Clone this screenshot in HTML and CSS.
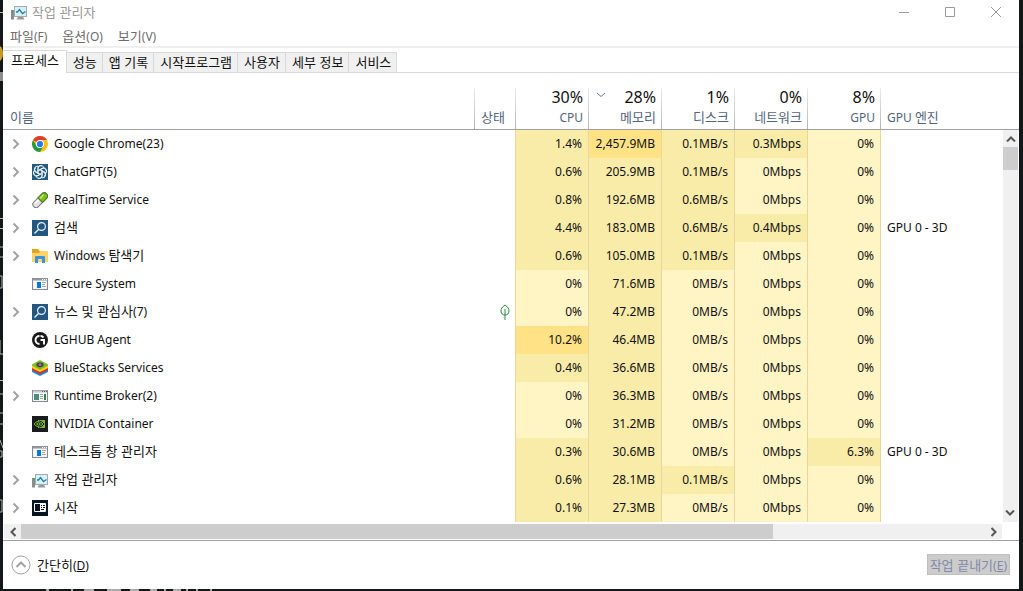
FILE: index.html
```html
<!DOCTYPE html>
<html lang="ko">
<head>
<meta charset="utf-8">
<meta name="viewport" content="width=device-width, initial-scale=1">
<title>작업 관리자</title>
<link rel="stylesheet" href="styles.css">
</head>
<body>
<svg class="defs" aria-hidden="true">
  <symbol id="chev" viewBox="0 0 8 12"><path d="M1.500 1.500 6 6l-4.500 4.500" fill="none" stroke="#a2a2a2" stroke-width="2"/></symbol>
  <symbol id="monitor" viewBox="0 0 16 16"><path d="M1.500 6v9.500" stroke="#8c8c8c" stroke-width="3"/><path d="M1.500 6v3" stroke="#3fae49" stroke-width="1"/><path d="M7 13h5l1.500 2.500h-8z" fill="#9a9a9a"/><rect x="3.500" y="2.500" width="12" height="10" fill="#d7f1fb" stroke="#a4abad"/><path d="M5 8h1.500l2-2.500 3 4 3-2" fill="none" stroke="#287fa5" stroke-width="1.300"/></symbol>
  <symbol id="app" viewBox="0 0 16 16"><rect x=".5" y="2.500" width="15" height="11" fill="#f5f5f5" stroke="#85898e"/><path d="M1 3.500h14" stroke="#9298a0" stroke-width="2"/><path d="M10 3.500h1m1 0h1m1 0h1" stroke="#fff"/><rect x="5" y="6" width="4" height="6" fill="#0078d7"/><path d="M10 6.500h4M10 8.500h3M10 10.500h4" stroke="#a5a5a5"/></symbol>
  <symbol id="broker" viewBox="0 0 16 16"><rect x=".5" y="2.500" width="15" height="11" fill="#f5f5f5" stroke="#85898e"/><path d="M1 3.500h14" stroke="#c2c8ce" stroke-width="2"/><path d="M10 3.500h1m1 0h1m1 0h1" stroke="#59636d"/><rect x="2" y="6" width="5" height="6" fill="#4b8c83"/><path d="M8 6.500h3M8 8.500h3M8 10.500h3" stroke="#a5a5a5"/><path d="M13 6v6" stroke="#35874d" stroke-width="2"/></symbol>
  <symbol id="find" viewBox="0 0 16 16"><path fill="#235780" d="M0 0h16v16H0z"/><circle cx="9.500" cy="6.500" r="3.900" fill="none" stroke="#e8f1f7" stroke-width="1.200"/><path d="m6.700 9.300-4.200 4.200" stroke="#e8f1f7" stroke-width="1.300"/></symbol>
  <symbol id="up" viewBox="0 0 10 6"><path d="M1 5.500 5 1.500l4 4" fill="none" stroke="currentColor" stroke-width="2"/></symbol>
</svg>
<div class="desktop">
  <svg class="edge" viewBox="0 0 3 591" aria-hidden="true"><path d="M0 12.500h3M0 218.500h3M0 228.500h3M0 247h3M0 257h3M0 276h2v12H0M0 340v14h3M0 380.500h3M0 394h3M0 413h3M0 424h3M0 440l3 8M0 451h2v6H0M0 500h2v12H0" fill="none" stroke="#b5b5b5"/><path d="M0 72h3v9H0z" fill="#8e8e8e"/><path d="M0 46c4 2 4 13 0 15z" fill="#c99b25"/></svg>
  <main class="window">
    <header class="titlebar">
      <svg class="icon" aria-hidden="true"><use href="#monitor"/></svg>
      <h1>작업 관리자</h1>
      <div class="controls">
        <button aria-label="최소화"><svg viewBox="0 0 12 12"><path d="M1 6.500h10"/></svg></button>
        <button aria-label="최대화"><svg viewBox="0 0 12 12"><path d="M1.500 1.500h9v9h-9z"/></svg></button>
        <button aria-label="닫기"><svg viewBox="0 0 12 12"><path d="m1 1 10 10M11 1 1 11"/></svg></button>
      </div>
    </header>
    <nav class="menu" aria-label="메뉴"><button>파일<span>(F)</span></button><button>옵션<span>(O)</span></button><button>보기<span>(V)</span></button></nav>
    <div class="tabs" role="tablist">
      <button role="tab" aria-selected="true" class="active">프로세스</button><button role="tab">성능</button><button role="tab">앱 기록</button><button role="tab">시작프로그램</button><button role="tab">사용자</button><button role="tab">세부 정보</button><button role="tab">서비스</button>
    </div>
    <section class="processes">
      <table>
        <colgroup><col><col class="c-status"><col class="c-num"><col class="c-num"><col class="c-num"><col class="c-num"><col class="c-num"><col class="c-engine"></colgroup>
        <thead><tr>
          <th scope="col" class="left">이름</th>
          <th scope="col" class="left">상태</th>
          <th scope="col"><b>30%</b><span class="en">CPU</span></th>
          <th scope="col" aria-sort="descending"><b><svg class="sort" viewBox="0 0 10 6" aria-hidden="true"><path d="m1 1 4 3.500L9 1"/></svg>28%</b>메모리</th>
          <th scope="col"><b>1%</b>디스크</th>
          <th scope="col"><b>0%</b>네트워크</th>
          <th scope="col"><b>8%</b><span class="en">GPU</span></th>
          <th scope="col" class="left"><span class="en">GPU </span>엔진</th>
        </tr></thead>
        <tbody>
          <tr><td><div class="name"><button aria-label="확장"><svg><use href="#chev"/></svg></button><svg class="icon" viewBox="0 0 16 16"><circle cx="8" cy="8" r="8" fill="#fbc116"/><path d="M8 8 1.100 4A8 8 0 0 1 14.900 4H8z" fill="#e33b2e"/><path d="M1.100 4A8 8 0 0 0 8 16l3.500-6L8 8 4.500 10z" fill="#229a4b"/><circle cx="8" cy="8" r="4" fill="#fff"/><circle cx="8" cy="8" r="3.100" fill="#2878e8"/></svg><span>Google Chrome(23)</span></div></td><td></td><td class="mid">1.4%</td><td class="high">2,457.9MB</td><td class="mid">0.1MB/s</td><td class="mid">0.3Mbps</td><td class="low">0%</td><td></td></tr>
          <tr><td><div class="name"><button aria-label="확장"><svg><use href="#chev"/></svg></button><svg class="icon" viewBox="0 0 16 16"><path fill="#245a7e" d="M0 0h16v16H0z"/><g fill="none" stroke="#e9f1f5" stroke-width="1"><path id="petal" d="M6 9.200V4.500c0-3.800 5.500-4 6-.4M6 6.800l4-2.300c2-1.200 4 .5 4 2.200"/><use href="#petal" transform="rotate(60 8 8)"/><use href="#petal" transform="rotate(120 8 8)"/><use href="#petal" transform="rotate(180 8 8)"/><use href="#petal" transform="rotate(240 8 8)"/><use href="#petal" transform="rotate(300 8 8)"/></g></svg><span>ChatGPT(5)</span></div></td><td></td><td class="mid">0.6%</td><td class="mid">205.9MB</td><td class="mid">0.1MB/s</td><td class="low">0Mbps</td><td class="low">0%</td><td></td></tr>
          <tr><td><div class="name"><button aria-label="확장"><svg><use href="#chev"/></svg></button><svg class="icon" viewBox="0 0 16 16"><g transform="rotate(-45 8 8)"><rect x="-1" y="5" width="18" height="6.500" rx="3.200" fill="#e4e4e4" stroke="#777"/><path d="M8 5h5.800a3.200 3.200 0 0 1 0 6.500H8z" fill="#7cc01c" stroke="#4a8220"/><path d="M2 7h5" stroke="#fff" stroke-width="1.500"/><path d="M9 7h5" stroke="#c5f07a" stroke-width="1.500"/></g></svg><span>RealTime Service</span></div></td><td></td><td class="mid">0.8%</td><td class="mid">192.6MB</td><td class="mid">0.6MB/s</td><td class="low">0Mbps</td><td class="low">0%</td><td></td></tr>
          <tr><td><div class="name"><button aria-label="확장"><svg><use href="#chev"/></svg></button><svg class="icon"><use href="#find"/></svg><span class="ko">검색</span></div></td><td></td><td class="mid">4.4%</td><td class="mid">183.0MB</td><td class="mid">0.6MB/s</td><td class="mid">0.4Mbps</td><td class="low">0%</td><td>GPU 0 - 3D</td></tr>
          <tr><td><div class="name"><button aria-label="확장"><svg><use href="#chev"/></svg></button><svg class="icon" viewBox="0 0 16 16"><path d="M0 1h6l1.500 2H16v11H0z" fill="#e6a519"/><path d="M0 5h7l1.500-2H16v11H0z" fill="#ffd365"/><path d="M3 15V9q0-1 1-1h8q1 0 1 1v6h-3v-4H6v4z" fill="#3694de"/></svg><span>Windows <span class="ko">탐색기</span></span></div></td><td></td><td class="mid">0.6%</td><td class="mid">105.0MB</td><td class="mid">0.1MB/s</td><td class="low">0Mbps</td><td class="low">0%</td><td></td></tr>
          <tr><td><div class="name"><i></i><svg class="icon"><use href="#app"/></svg><span>Secure System</span></div></td><td></td><td class="low">0%</td><td class="mid">71.6MB</td><td class="low">0MB/s</td><td class="low">0Mbps</td><td class="low">0%</td><td></td></tr>
          <tr><td><div class="name"><button aria-label="확장"><svg><use href="#chev"/></svg></button><svg class="icon"><use href="#find"/></svg><span><span class="ko">뉴스 및 관심사</span>(7)</span></div></td><td class="status"><svg class="leaf" viewBox="0 0 10 16" role="img" aria-label="절전 모드"><path d="M5 1C2 3 1 5 1 7c0 3 2 4 4 4s4-1 4-4c0-2-1-4-4-6zM5 5v11"/></svg></td><td class="low">0%</td><td class="mid">47.2MB</td><td class="low">0MB/s</td><td class="low">0Mbps</td><td class="low">0%</td><td></td></tr>
          <tr><td><div class="name"><i></i><svg class="icon" viewBox="0 0 16 16"><circle cx="8" cy="8" r="8" fill="#191919"/><path d="M7.500 4A4 4 0 0 0 7.500 12M8.500 8h3.500v4.500M8.500 4q2 0 3 1.500" fill="none" stroke="#fff" stroke-width="1.900"/></svg><span>LGHUB Agent</span></div></td><td></td><td class="high">10.2%</td><td class="mid">46.4MB</td><td class="low">0MB/s</td><td class="low">0Mbps</td><td class="low">0%</td><td></td></tr>
          <tr><td><div class="name"><i></i><svg class="icon" viewBox="0 0 16 16"><path d="m0 9 8 4 8-4v3l-8 4-8-4z" fill="#2485cf"/><path d="m0 7 8 4 8-4v3l-8 4-8-4z" fill="#e52c27"/><path d="m0 5 8 4 8-4v3l-8 4-8-4z" fill="#ffd216"/><path d="M0 4.500 8 0l8 4.500v1L8 10 0 5.500z" fill="#7abb2b"/><ellipse cx="8" cy="4.800" rx="3.500" ry="2.400" fill="#394143"/><ellipse cx="8" cy="4.800" rx="1.600" ry="1.200" fill="#b66bb0"/></svg><span>BlueStacks Services</span></div></td><td></td><td class="mid">0.4%</td><td class="mid">36.6MB</td><td class="low">0MB/s</td><td class="low">0Mbps</td><td class="low">0%</td><td></td></tr>
          <tr><td><div class="name"><button aria-label="확장"><svg><use href="#chev"/></svg></button><svg class="icon"><use href="#broker"/></svg><span>Runtime Broker(2)</span></div></td><td></td><td class="low">0%</td><td class="mid">36.3MB</td><td class="low">0MB/s</td><td class="low">0Mbps</td><td class="low">0%</td><td></td></tr>
          <tr><td><div class="name"><i></i><svg class="icon" viewBox="0 0 16 16"><path fill="#191b1c" d="M0 0h16v16H0z"/><path d="M6 4h7v8H6z" fill="#74b72c"/><path d="M2 8q4-5 9 0-5 5-9 0zM4.500 8q2-2.500 4 0-2 2.500-4 0z" fill="#191b1c" stroke="#74b72c"/><path d="M7 5q3 0 5 3-2 3-5 3" fill="none" stroke="#191b1c"/></svg><span>NVIDIA Container</span></div></td><td></td><td class="low">0%</td><td class="mid">31.2MB</td><td class="low">0MB/s</td><td class="low">0Mbps</td><td class="low">0%</td><td></td></tr>
          <tr><td><div class="name"><i></i><svg class="icon"><use href="#app"/></svg><span class="ko">데스크톱 창 관리자</span></div></td><td></td><td class="mid">0.3%</td><td class="mid">30.6MB</td><td class="low">0MB/s</td><td class="low">0Mbps</td><td class="mid">6.3%</td><td>GPU 0 - 3D</td></tr>
          <tr><td><div class="name"><button aria-label="확장"><svg><use href="#chev"/></svg></button><svg class="icon"><use href="#monitor"/></svg><span class="ko">작업 관리자</span></div></td><td></td><td class="mid">0.6%</td><td class="mid">28.1MB</td><td class="mid">0.1MB/s</td><td class="low">0Mbps</td><td class="low">0%</td><td></td></tr>
          <tr><td><div class="name"><button aria-label="확장"><svg><use href="#chev"/></svg></button><svg class="icon" viewBox="0 0 16 16"><path fill="#071522" d="M0 0h16v16H0z"/><path d="M2.500 3.500h11v8h-11z" fill="none" stroke="#fff"/><path d="M8 4h5v7H8z" fill="#fff"/><path d="M9 5.500h1m1 0h2M9 7.500h1m1 0h2M9 9.500h3" stroke="#071522"/></svg><span class="ko">시작</span></div></td><td></td><td class="mid">0.1%</td><td class="mid">27.3MB</td><td class="low">0MB/s</td><td class="low">0Mbps</td><td class="low">0%</td><td></td></tr>
        </tbody>
      </table>
      <div class="vscroll"><button aria-label="위로"><svg><use href="#up"/></svg></button><div class="thumb"></div><button class="down" aria-label="아래로"><svg><use href="#up"/></svg></button></div>
      <div class="hscroll"><button class="prev" aria-label="왼쪽"><svg><use href="#up"/></svg></button><div class="track"><div class="thumb"></div></div><button class="next" aria-label="오른쪽"><svg><use href="#up"/></svg></button></div>
    </section>
    <footer>
      <button class="fewer"><svg viewBox="0 0 20 20" aria-hidden="true"><circle cx="10" cy="10" r="9"/><path d="m5.500 12 4.500-4.500 4.500 4.500" stroke-width="2"/></svg><span>간단히<span class="key">(<u>D</u>)</span></span></button>
      <button class="end" disabled>작업 끝내기<span class="key">(<u>E</u>)</span></button>
    </footer>
  </main>
  <svg class="under" viewBox="0 0 260 2" aria-hidden="true"><path d="M43 1h3M68 1h2M81 1h10M104 1h14M127 1h9M147 1h7M161 1h2M170 1h8M183 1h2M193 1h2M207 1h2" stroke="#aaa" stroke-width="2"/></svg>
</div>
</body>
</html>
```
FILE: styles.css
```css
* { box-sizing: border-box; }
body {
  margin: 0;
  background: #141717;
  color: #111;
  font: 12px/16px "Noto Sans", "Noto Sans CJK KR", sans-serif;
}
button {
  margin: 0;
  padding: 0;
  border: 0;
  background: none;
  color: inherit;
  font: inherit;
}
svg { display: block; }
.defs { position: absolute; width: 0; height: 0; }
.icon { width: 16px; height: 16px; flex: none; }

.desktop {
  display: grid;
  grid-template-columns: 3px minmax(0, 1fr) 4px;
  grid-template-rows: 1fr 2px;
  min-height: 100vh;
}
.edge { grid-area: 1 / 1 / 3 / 2; width: 3px; height: 591px; }
.under { grid-area: 2 / 2; width: 260px; height: 2px; }
.window {
  display: flex;
  flex-direction: column;
  grid-area: 1 / 2;
  background: #fff;
}

.titlebar, .menu, .tabs, .ko, th, footer {
  font-family: "Noto Sans CJK KR", sans-serif;
  font-size: 13px;
}
.ko { line-height: 14px; }
.titlebar {
  display: flex;
  align-items: center;
  height: 24px;
  padding-left: 8px;
  gap: 5px;
  color: #999;
}
h1 { margin: 0; font: inherit; }
.controls { display: flex; margin-left: auto; }
.controls button {
  display: grid;
  place-items: center;
  width: 46px;
  height: 24px;
}
.controls svg {
  width: 12px;
  height: 12px;
  fill: none;
  stroke: #999;
}

.menu {
  display: flex;
  align-items: center;
  height: 24px;
  gap: 15px;
  padding: 2px 0 0 7px;
  border-bottom: 2px solid #f0f0f0;
  color: #6d6d6d;
}
.menu span, .key, .en { font: 12px/12px "Noto Sans", sans-serif; }

.tabs {
  display: flex;
  align-items: flex-end;
  height: 25px;
  border-bottom: 1px solid #d9d9d9;
}
.tabs button {
  height: 20px;
  padding: 0 5px 2px 6px;
  border: 1px solid #d9d9d9;
  border-width: 1px 1px 0 0;
  background: #f0f0f0;
  white-space: nowrap;
}
.tabs .active {
  height: 23px;
  margin-bottom: -1px;
  padding: 0 7px 4px 8px;
  background: #fff;
}

.processes {
  display: grid;
  grid-template-columns: minmax(0, 1fr) 16px;
  grid-template-rows: 42px 1fr 18px;
  margin-top: 15px;
  border-bottom: 1px solid #a0a0a0;
}
table {
  grid-area: 1 / 1 / 3 / 3;
  width: 100%;
  table-layout: fixed;
  border-collapse: separate;
  border-spacing: 0;
}
.c-status { width: 41px; }
.c-num { width: 73px; }
.c-engine { width: 138px; }
th {
  height: 42px;
  padding: 0 6px 5px;
  border-bottom: 1px solid #a0a0a0;
  background: linear-gradient(#ececec, #b4b4b4) right / 1px 100% no-repeat;
  color: #52657c;
  font-weight: 400;
  line-height: 14px;
  text-align: right;
  vertical-align: bottom;
  white-space: nowrap;
}
th:first-child { padding-left: 7px; }
th:last-child { background: none; }
.left { text-align: left; }
th b {
  display: flex;
  align-items: center;
  justify-content: flex-end;
  margin-bottom: 4px;
  color: #111;
  font: 16px/18px "Noto Sans", sans-serif;
}
.sort {
  width: 10px;
  height: 6px;
  margin: 0 auto 4px 1px;
  fill: none;
  stroke: #6a7c8f;
}
td {
  height: 28px;
  padding: 0 6px;
  text-align: right;
  white-space: nowrap;
}
td:first-child, td:last-child { text-align: left; }
td:nth-child(2), .low, .mid, .high { border-right: 1px solid #e9d69d; }
.low { background: #fff4c4; }
.mid { background: #f9eca8; }
.high { background: #ffe285; }
.name { display: flex; align-items: center; }
.name > button, .name > i { width: 23px; height: 16px; }
.name > button { padding: 2px 3px; }
.name > button svg { width: 8px; height: 12px; }
.name > .icon { margin-right: 6px; }
.name > .ko { padding-bottom: 2px; }
.status { padding: 0 5px; }
.leaf {
  width: 10px;
  height: 16px;
  margin-left: auto;
  fill: none;
  stroke: #218f42;
}

.vscroll {
  grid-area: 2 / 2;
  display: flex;
  flex-direction: column;
  margin-right: 1px;
  background: #f0f0f0;
  color: #555;
}
.vscroll button, .hscroll button {
  display: grid;
  place-items: center;
  width: 15px;
  height: 17px;
}
.vscroll button svg, .hscroll button svg { width: 10px; height: 6px; }
.vscroll .thumb { height: 23px; background: #cdcdcd; }
.down { margin-top: auto; transform: rotate(180deg); }
.hscroll {
  grid-area: 3 / 1;
  display: flex;
  align-items: center;
  height: 15px;
  margin: 2px 1px 1px;
  background: #f0f0f0;
  color: #555;
}
.hscroll button { width: 17px; }
.prev svg { transform: rotate(-90deg); }
.next svg { transform: rotate(90deg); }
.track { flex: 1; height: 15px; }
.track .thumb { width: 78%; height: 15px; background: #cdcdcd; }

footer {
  display: flex;
  flex: 1;
  align-items: center;
  justify-content: space-between;
  min-height: 48px;
  padding: 0 9px 1px 8px;
}
.fewer { display: flex; align-items: center; gap: 6px; }
.fewer svg {
  width: 20px;
  height: 20px;
  fill: none;
  stroke: #a0a0a0;
}
.end {
  height: 21px;
  padding: 0 2px;
  border: 1px solid #bfbfbf;
  background: #ccc;
  color: #838aa5;
}
```
